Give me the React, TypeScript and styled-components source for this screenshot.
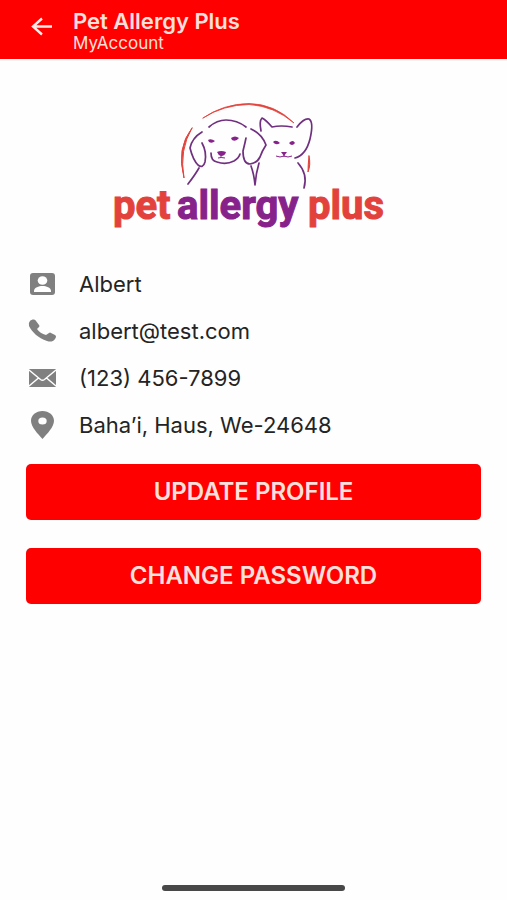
import React from "react";
import styled, { createGlobalStyle } from "styled-components";

const GlobalStyle = createGlobalStyle`
  * { box-sizing: border-box; }
  body {
    margin: 0;
    background: #fefefe;
    font-family: Inter, "Liberation Sans", sans-serif;
  }
`;

const Screen = styled.div`
  display: flex;
  flex-direction: column;
  min-height: 100vh;
`;

const Header = styled.header`
  display: flex;
  align-items: flex-start;
  gap: 18px;
  padding: 9px 28px 6px;
  background: #ff0000;
  color: #ffe0dc;
`;

const BackButton = styled.button`
  display: flex;
  padding: 5px 0;
  border: 0;
  background: none;
  color: #ffe9e6;
  cursor: pointer;
`;

const Title = styled.h1`
  margin: 0;
  font-size: 22px;
  line-height: 24px;
  font-weight: 600;
`;

const Subtitle = styled.p`
  margin: 0;
  font-size: 17px;
  line-height: 20px;
`;

const Main = styled.main`
  display: flex;
  flex-direction: column;
  flex: 1;
  padding: 39px 26px 0;
`;

const Logo = styled.svg`
  align-self: center;
  margin-right: 10px;
`;

const Wordmark = styled.text<{ $color: string }>`
  fill: ${(p) => p.$color};
  stroke: ${(p) => p.$color};
  stroke-width: 1;
  font-family: Roboto, "Liberation Sans", sans-serif;
  font-size: 40px;
  font-weight: 700;
`;

const Details = styled.ul`
  display: flex;
  flex-direction: column;
  margin: 26px 0 0;
  padding: 0;
  list-style: none;
`;

const Detail = styled.li`
  display: flex;
  align-items: center;
  gap: 22px;
  height: 47px;
  padding-left: 2px;
  color: #242424;
  font-size: 22px;
  line-height: 28px;
`;

const Icon = styled.svg`
  flex: none;
  fill: #808080;
`;

const Actions = styled.div`
  display: flex;
  flex-direction: column;
  gap: 28px;
  margin-top: 16px;
`;

const ActionButton = styled.button`
  height: 56px;
  border: 0;
  border-radius: 5px;
  background: #ff0000;
  color: #ffe0dc;
  font: 600 24px/28px Inter, "Liberation Sans", sans-serif;
  cursor: pointer;
`;

const Footer = styled.footer`
  display: flex;
  justify-content: center;
  padding: 9px 0;
`;

const HomeIndicator = styled.div`
  width: 36%;
  height: 6px;
  border-radius: 3px;
  background: #484848;
`;

const RED = "#e2423b";
const PURPLE = "#87228b";

const PetLogo = () => (
  <Logo width="280" height="136" viewBox="110 98 280 136" role="img" aria-label="pet allergy plus">
    <g fill="none" stroke={RED} strokeLinecap="round">
      <path d="M204 118Q224 104 250 103.5Q276 104 295 123Q275 106 250 104.5Q224 105 204 118Z" fill={RED} strokeWidth="0.8" />
      <path d="M193 128Q177 148 185 178Q180 150 193 128Z" fill={RED} strokeWidth="1" />
      <path d="M310 156Q312 165 309 172Q309 165 310 156Z" fill={RED} strokeWidth="1" />
    </g>
    <g fill="none" stroke="#70307f" strokeLinecap="round" strokeLinejoin="round" strokeWidth="1.7">
      <path d="M210 127Q218 120 227 120Q238 120 247 127" />
      <path d="M203 132Q193 138 191 148Q194 160 199 165Q204 169 206 162Q208 152 203 143" />
      <path d="M212 153Q212 161 218 162Q227 165 235 161Q240 158 241 154" />
      <path d="M247 138Q246 143 244 151Q244 164 251 164Q258 163 261 157Q263 151 267 145Q263 134 252 129" />
      <path d="M200 168Q196 175 189 184M252 166Q255 174 256 185M260 163Q257 173 256 185" />
      <path d="M262 131Q260 121 263 118Q267 120 273 127Q282 125 293 127" />
      <path d="M298 127Q305 118 310 119Q315 122 311 139Q307 155 296 158" />
      <path d="M299 163Q309 174 305 188" />
    </g>
    <g fill={PURPLE}>
      <path d="M209 140Q212 138 216 141Q213 144 210 142ZM232 138Q236 135 240 138Q237 142 233 140Z" />
      <path d="M218 152Q222 150 227 152Q226 156 222 156Q219 155 218 152Z" />
      <path d="M274 142Q277 139 281 143Q277 146 274 142ZM290 143Q294 139 296 143Q293 147 290 143Z" />
      <path d="M282 152H288L285 156Z" />
    </g>
    <path d="M222 155V158M219 158Q222 157 226 158M285 155V157M277 156Q281 158 285 156Q289 158 293 156" fill="none" stroke={PURPLE} />
    <Wordmark $color={RED} x="114" y="219">pet</Wordmark>
    <Wordmark $color={PURPLE} x="178" y="219">allergy</Wordmark>
    <Wordmark $color={RED} x="309" y="219">plus</Wordmark>
  </Logo>
);

const PersonIcon = () => (
  <Icon width="29" height="24" viewBox="0 0 29 24" aria-hidden="true">
    <rect x="2" y="1" width="25" height="22" rx="3" />
    <ellipse cx="14.5" cy="8.5" rx="4.8" ry="4.3" fill="#fff" />
    <path d="M6 20V18.5C7 12.5 22 12.5 23 18.5V20Z" fill="#fff" />
  </Icon>
);

const PhoneIcon = () => (
  <Icon width="29" height="24" viewBox="0 0 29 24" aria-hidden="true">
    <path d="M2 2C4 0 7 0 8 2L11 6Q12 7 11 8L9 10C11 13 14 15 18 16L21 14Q22 13 23 14L27 16Q29 17 27 20C25 23 22 23 19 22C10 19 4 13 1 7Q0 4 2 2Z" />
  </Icon>
);

const MailIcon = () => (
  <Icon width="29" height="24" viewBox="0 0 29 24" aria-hidden="true">
    <rect x="1" y="3" width="27" height="18" rx="1" />
    <path d="M1 4L12.5 13.5Q14.5 15 16.5 13.5L28 4M1 20L10.5 12M28 20L18.5 12" fill="none" stroke="#fff" strokeWidth="1.5" />
  </Icon>
);

const PinIcon = () => (
  <Icon width="29" height="28" viewBox="0 0 29 28" aria-hidden="true">
    <path d="M14.5 0C8 0 3 4.3 3 9.8C3 16 10 23 14.5 28C19 23 26 16 26 9.8C26 4.3 21 0 14.5 0ZM14.5 6.5A4.2 3.5 0 1 1 14.5 13.5A4.2 3.5 0 1 1 14.5 6.5Z" fillRule="evenodd" />
  </Icon>
);

const details = [
  { icon: <PersonIcon />, text: "Albert" },
  { icon: <PhoneIcon />, text: "albert@test.com" },
  { icon: <MailIcon />, text: "(123) 456-7899" },
  { icon: <PinIcon />, text: "Baha’i, Haus, We-24648" },
];

export default function App() {
  return (
    <Screen>
      <GlobalStyle />
      <Header>
        <BackButton aria-label="Back">
          <svg width="27" height="24" viewBox="0 0 27 24" fill="none" stroke="currentColor" strokeWidth="2.4" aria-hidden="true">
            <path d="M24 12.5H5M14 4.5L5 12.5L14 20.5" />
          </svg>
        </BackButton>
        <div>
          <Title>Pet Allergy Plus</Title>
          <Subtitle>MyAccount</Subtitle>
        </div>
      </Header>
      <Main>
        <PetLogo />
        <Details>
          {details.map((d) => (
            <Detail key={d.text}>
              {d.icon}
              <span>{d.text}</span>
            </Detail>
          ))}
        </Details>
        <Actions>
          <ActionButton>UPDATE PROFILE</ActionButton>
          <ActionButton>CHANGE PASSWORD</ActionButton>
        </Actions>
      </Main>
      <Footer>
        <HomeIndicator />
      </Footer>
    </Screen>
  );
}
